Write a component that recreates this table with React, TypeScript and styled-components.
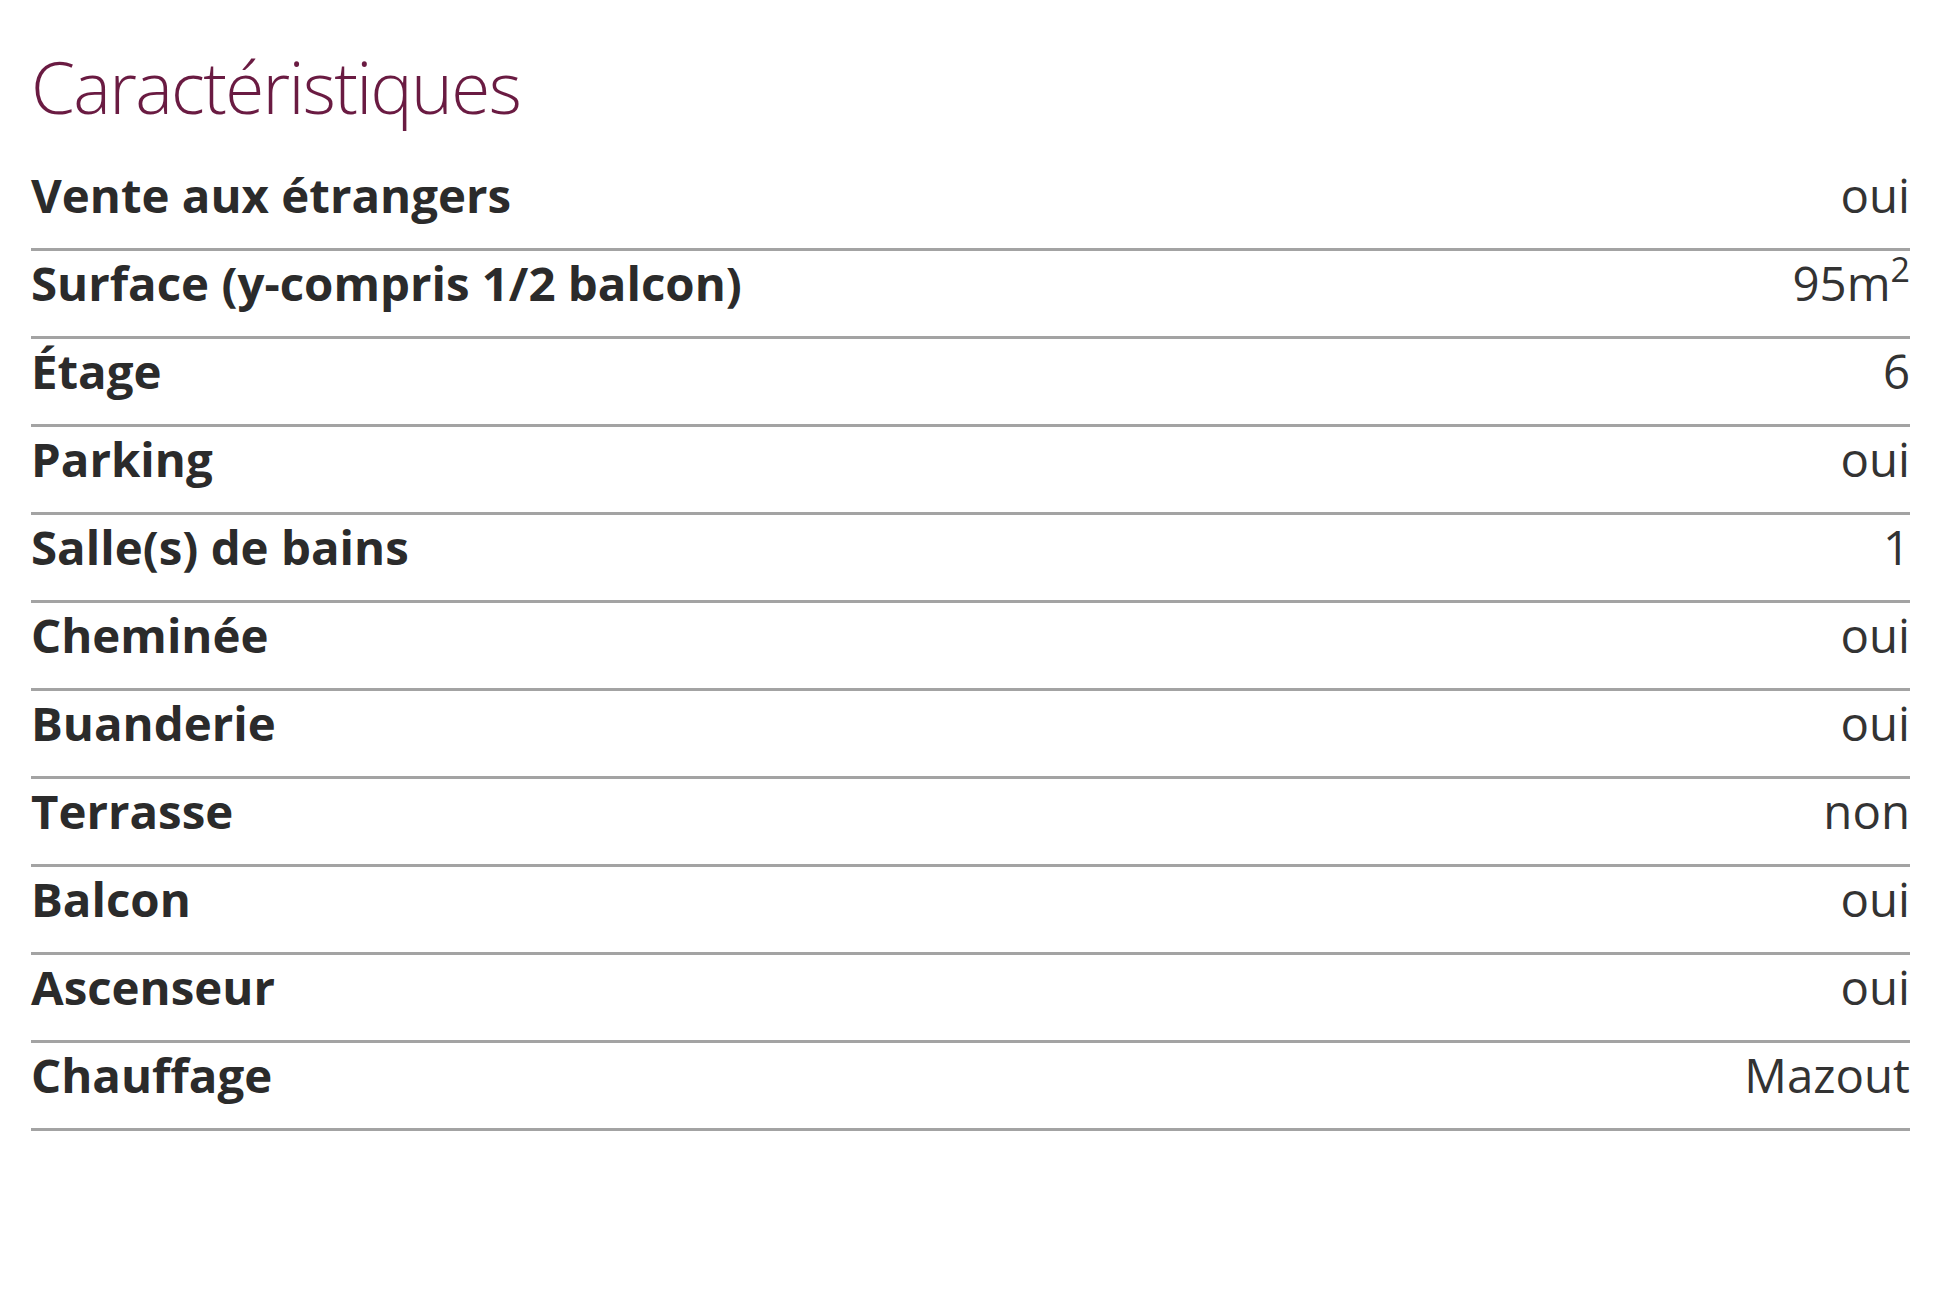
import * as React from "react";
import styled, { createGlobalStyle } from "styled-components";

const GlobalStyle = createGlobalStyle`
  html, body {
    margin: 0;
    padding: 0;
    background: #ffffff;
  }
  body {
    font-family: "Open Sans", "Noto Sans", sans-serif;
  }
`;

const Page = styled.div`
  padding: 44px 50px 0 31px;
  width: 1879px;
`;

const Title = styled.h2`
  margin: 0 0 33px;
  font-size: 71px;
  line-height: 86px;
  font-weight: 300;
  letter-spacing: -1.7px;
  color: #6a1b42;
`;

const List = styled.div`
  display: flex;
  flex-direction: column;
`;

const Row = styled.div`
  display: flex;
  justify-content: space-between;
  align-items: baseline;
  padding: 0 0 21px;
  border-bottom: 3px solid #a3a3a3;
  font-size: 47.4px;
  line-height: 64px;
  color: #2b2b2b;
`;

const Label = styled.span`
  font-weight: 700;
`;

const Value = styled.span`
  font-weight: 400;
  color: #333333;

  sup {
    font-size: 34px;
    line-height: 0;
    vertical-align: 19px;
  }
`;

const features: { label: string; value: React.ReactNode }[] = [
    { label: "Vente aux étrangers", value: "oui" },
    { label: "Surface (y-compris 1/2 balcon)", value: <>95m<sup>2</sup></> },
    { label: "Étage", value: "6" },
    { label: "Parking", value: "oui" },
    { label: "Salle(s) de bains", value: "1" },
    { label: "Cheminée", value: "oui" },
    { label: "Buanderie", value: "oui" },
    { label: "Terrasse", value: "non" },
    { label: "Balcon", value: "oui" },
    { label: "Ascenseur", value: "oui" },
    { label: "Chauffage", value: "Mazout" },
];

const App = () => (
    <>
        <GlobalStyle />
        <Page>
            <Title>Caractéristiques</Title>
            <List>
                {features.map((f) =>
                    <Row key={f.label}>
                        <Label>{f.label}</Label>
                        <Value>{f.value}</Value>
                    </Row>
                )}
            </List>
        </Page>
    </>
);

export default App;
